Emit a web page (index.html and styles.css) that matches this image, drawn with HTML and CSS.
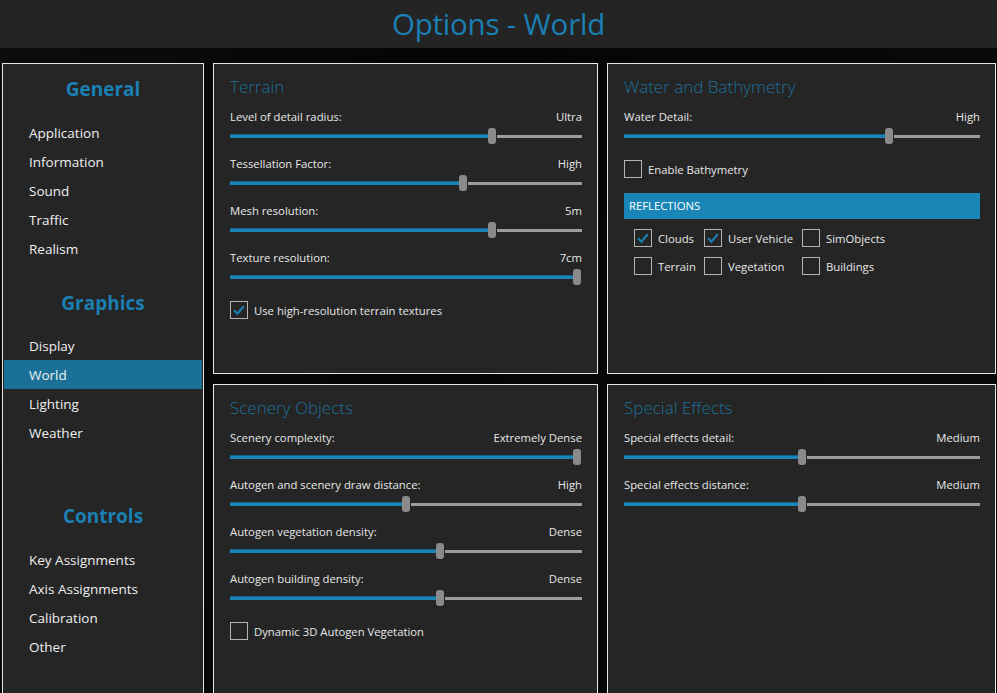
FILE: index.html
```html
<!DOCTYPE html>
<html>
<head>
<meta charset="utf-8">
<title>Options - World</title>
<link rel="stylesheet" href="styles.css">
</head>
<body>
<header class="topbar"><h1 class="title">Options - World</h1></header>
<main class="layout">
  <nav class="sidebar">
    <h2 class="side-head side-head-general">General</h2>
    <ul class="side-list">
      <li class="side-item">Application</li>
      <li class="side-item">Information</li>
      <li class="side-item">Sound</li>
      <li class="side-item">Traffic</li>
      <li class="side-item">Realism</li>
    </ul>
    <h2 class="side-head side-head-graphics">Graphics</h2>
    <ul class="side-list">
      <li class="side-item">Display</li>
      <li class="side-item active">World</li>
      <li class="side-item">Lighting</li>
      <li class="side-item">Weather</li>
    </ul>
    <h2 class="side-head side-head-controls">Controls</h2>
    <ul class="side-list">
      <li class="side-item">Key Assignments</li>
      <li class="side-item">Axis Assignments</li>
      <li class="side-item">Calibration</li>
      <li class="side-item">Other</li>
    </ul>
  </nav>

  <section class="panel panel-terrain">
    <h3 class="panel-title">Terrain</h3>
    <div class="setting">
      <div class="setting-row"><span>Level of detail radius:</span><span>Ultra</span></div>
      <div class="slider" style="--v:0.75"><div class="fill"></div><div class="thumb"></div><div class="rest"></div></div>
    </div>
    <div class="setting">
      <div class="setting-row"><span>Tessellation Factor:</span><span>High</span></div>
      <div class="slider" style="--v:0.667"><div class="fill"></div><div class="thumb"></div><div class="rest"></div></div>
    </div>
    <div class="setting">
      <div class="setting-row"><span>Mesh resolution:</span><span>5m</span></div>
      <div class="slider" style="--v:0.75"><div class="fill"></div><div class="thumb"></div><div class="rest"></div></div>
    </div>
    <div class="setting">
      <div class="setting-row"><span>Texture resolution:</span><span>7cm</span></div>
      <div class="slider" style="--v:1"><div class="fill"></div><div class="thumb"></div><div class="rest"></div></div>
    </div>
    <label class="check check-main"><span class="box checked"><svg viewBox="0 0 18 18" width="18" height="18"><path d="M4 9.2 L7.4 12.6 L13.8 5.2" fill="none" stroke="#1a7fb3" stroke-width="2.2"/></svg></span><span>Use high-resolution terrain textures</span></label>
  </section>

  <section class="panel panel-water">
    <h3 class="panel-title">Water and Bathymetry</h3>
    <div class="setting">
      <div class="setting-row"><span>Water Detail:</span><span>High</span></div>
      <div class="slider" style="--v:0.75"><div class="fill"></div><div class="thumb"></div><div class="rest"></div></div>
    </div>
    <label class="check check-main"><span class="box"></span><span>Enable Bathymetry</span></label>
    <div class="section-bar">REFLECTIONS</div>
    <div class="check-grid">
      <label class="check"><span class="box checked"><svg viewBox="0 0 18 18" width="18" height="18"><path d="M4 9.2 L7.4 12.6 L13.8 5.2" fill="none" stroke="#1a7fb3" stroke-width="2.2"/></svg></span><span>Clouds</span></label>
      <label class="check"><span class="box checked"><svg viewBox="0 0 18 18" width="18" height="18"><path d="M4 9.2 L7.4 12.6 L13.8 5.2" fill="none" stroke="#1a7fb3" stroke-width="2.2"/></svg></span><span>User Vehicle</span></label>
      <label class="check"><span class="box"></span><span>SimObjects</span></label>
      <label class="check"><span class="box"></span><span>Terrain</span></label>
      <label class="check"><span class="box"></span><span>Vegetation</span></label>
      <label class="check"><span class="box"></span><span>Buildings</span></label>
    </div>
  </section>

  <section class="panel panel-scenery">
    <h3 class="panel-title">Scenery Objects</h3>
    <div class="setting">
      <div class="setting-row"><span>Scenery complexity:</span><span>Extremely Dense</span></div>
      <div class="slider" style="--v:1"><div class="fill"></div><div class="thumb"></div><div class="rest"></div></div>
    </div>
    <div class="setting">
      <div class="setting-row"><span>Autogen and scenery draw distance:</span><span>High</span></div>
      <div class="slider" style="--v:0.5"><div class="fill"></div><div class="thumb"></div><div class="rest"></div></div>
    </div>
    <div class="setting">
      <div class="setting-row"><span>Autogen vegetation density:</span><span>Dense</span></div>
      <div class="slider" style="--v:0.6"><div class="fill"></div><div class="thumb"></div><div class="rest"></div></div>
    </div>
    <div class="setting">
      <div class="setting-row"><span>Autogen building density:</span><span>Dense</span></div>
      <div class="slider" style="--v:0.6"><div class="fill"></div><div class="thumb"></div><div class="rest"></div></div>
    </div>
    <label class="check check-main"><span class="box"></span><span>Dynamic 3D Autogen Vegetation</span></label>
  </section>

  <section class="panel panel-effects">
    <h3 class="panel-title">Special Effects</h3>
    <div class="setting">
      <div class="setting-row"><span>Special effects detail:</span><span>Medium</span></div>
      <div class="slider" style="--v:0.5"><div class="fill"></div><div class="thumb"></div><div class="rest"></div></div>
    </div>
    <div class="setting">
      <div class="setting-row"><span>Special effects distance:</span><span>Medium</span></div>
      <div class="slider" style="--v:0.5"><div class="fill"></div><div class="thumb"></div><div class="rest"></div></div>
    </div>
  </section>
</main>
</body>
</html>
```
FILE: styles.css
```css
* { box-sizing: border-box; }
html, body {
  margin: 0;
  padding: 0;
  width: 997px;
  height: 693px;
  overflow: hidden;
  background: #070707;
  font-family: "Open Sans", "Noto Sans", sans-serif;
  color: #e8e8e8;
}
.topbar {
  height: 48px;
  background: #242424;
  display: flex;
  align-items: center;
  justify-content: center;
}
.title {
  margin: 0;
  font-size: 29.5px;
  font-weight: 400;
  color: #1a7fb3;
  line-height: 48px;
  letter-spacing: -0.2px;
}
.layout {
  display: grid;
  grid-template-columns: 202px 385px 389px;
  grid-template-rows: 311px 330px;
  column-gap: 9px;
  row-gap: 10px;
  padding: 15px 0 0 2px;
  background: linear-gradient(100deg, #0c0c0c 0%, #050505 40%, #0a0a0a 100%);
  height: 645px;
}
.sidebar {
  grid-row: 1 / 3;
  grid-column: 1;
  border: 1px solid #e6e6e6;
  border-bottom: none;
  background: #252525;
  padding: 0 1px;
}
.side-head {
  margin: 0;
  font-size: 19px;
  font-weight: 700;
  color: #1a7fb3;
  text-align: center;
  line-height: 30px;
  height: 30px;
}
.side-head-general { margin-top: 10px; margin-bottom: 14px; }
.side-head-graphics { margin-top: 25px; margin-bottom: 13px; }
.side-head-controls { margin-top: 54px; margin-bottom: 14px; }
.side-list {
  list-style: none;
  margin: 0;
  padding: 0;
}
.side-item {
  height: 29px;
  line-height: 29px;
  padding: 1px 0 0 25px;
  font-size: 13.5px;
  color: #f0f0f0;
}
.side-item.active {
  background: #1a7096;
}
.panel {
  border: 1px solid #e6e6e6;
  background: #252525;
  padding: 11px 15px 0 16px;
  display: flex;
  flex-direction: column;
}
.panel-scenery, .panel-effects {
  border-bottom: none;
}
.panel-title {
  margin: 0 0 10px 0;
  font-size: 17px;
  font-weight: 300;
  line-height: 24px;
  height: 24px;
  color: #1d6f99;
}
.setting {
  margin-bottom: 12px;
}
.setting-row {
  display: flex;
  justify-content: space-between;
  font-size: 11.3px;
  line-height: 16px;
  height: 16px;
  color: #e8e8e8;
  margin-bottom: 3px;
}
.slider {
  height: 16px;
  display: flex;
  align-items: center;
}
.fill {
  width: calc((100% - 8px) * var(--v));
  height: 4px;
  background: #1a86b8;
  border-top: 1px solid #14638a;
}
.thumb {
  flex: 0 0 8px;
  height: 16px;
  border-radius: 3px;
  background: #8a8a8a;
}
.rest {
  flex: 1;
  height: 3px;
  margin-left: 1px;
  background: #9c9c9c;
}
.check {
  display: flex;
  align-items: center;
  gap: 6px;
  font-size: 11.3px;
  color: #e8e8e8;
  height: 18px;
}
.check-main {
  margin-top: 4px;
}
.box {
  flex: 0 0 18px;
  width: 18px;
  height: 18px;
  border: 1px solid #b4b4b4;
  position: relative;
}
.box svg {
  position: absolute;
  left: -1px;
  top: -1px;
}
.section-bar {
  margin-top: 15px;
  height: 26px;
  line-height: 26px;
  background: #1a86b8;
  color: #ffffff;
  font-size: 11.3px;
  padding-left: 5px;
}
.check-grid {
  margin-top: 10px;
  padding-left: 10px;
  display: grid;
  grid-template-columns: 70px 98px auto;
  row-gap: 10px;
}
```
